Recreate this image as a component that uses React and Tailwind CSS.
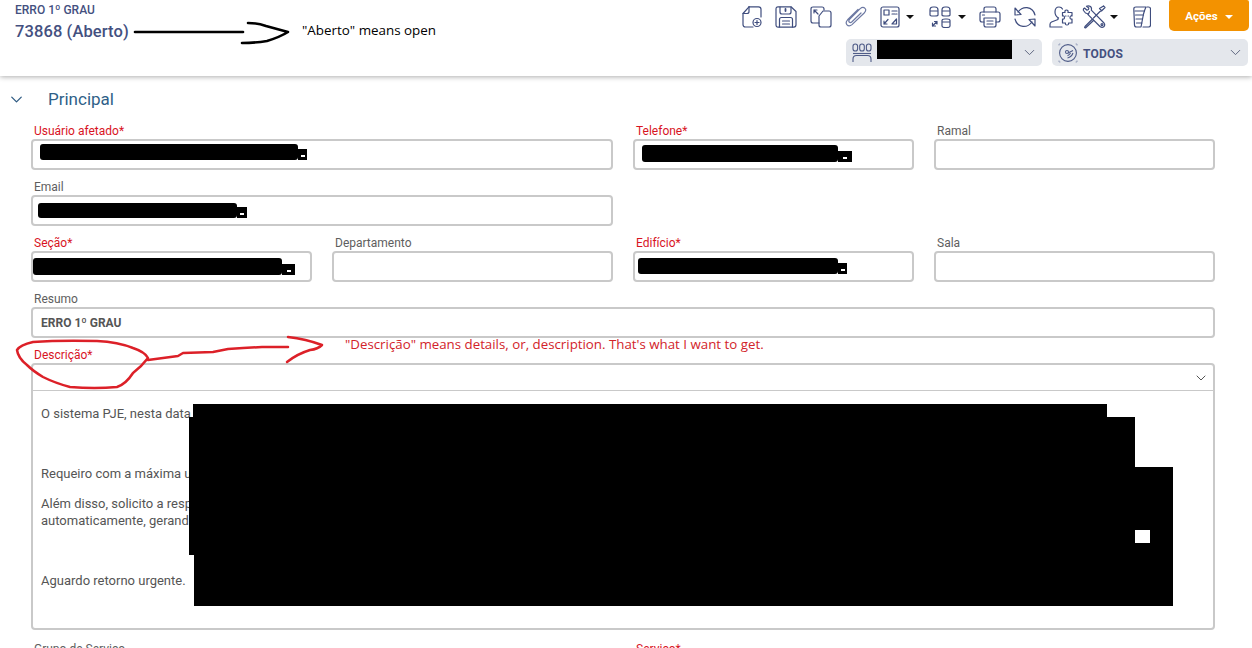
import React from "react";
import { ChevronDown } from "lucide-react";

const Ico = ({ w = 22, h = 22, vb, children, cls = "" }) => (
  <svg width={w} height={h} viewBox={vb || `0 0 ${w} ${h}`} fill="none" stroke="#3f4d7e" strokeWidth="1.2" strokeLinecap="round" strokeLinejoin="round" className={`shrink-0 ${cls}`}>
    {children}
  </svg>
);

const Caret = ({ cls = "" }) => (
  <span className={`w-0 h-0 border-l-[4px] border-r-[4px] border-t-[4px] border-l-transparent border-r-transparent border-t-[#111] ${cls}`} />
);

const NewDoc = () => (
  <Ico w={20} h={22}>
    <path d="M7 .8H16.5Q19 .8 19 3.2V11" />
    <path d="M7 .8 1 7.5V18.5Q1 21 3.5 21H11" />
    <path d="M7 .8V5.5Q7 7.5 5 7.5H1" />
    <circle cx="15" cy="16.5" r="4" />
    <path d="M15 14.5v4M13 16.5h4" />
  </Ico>
);
const Save = () => (
  <Ico w={22} h={22}>
    <path d="M3 .8H16L21 5.5V18.8Q21 21.2 18.8 21.2H3.2Q1 21.2 1 18.8V3Q1 .8 3 .8Z" />
    <path d="M5 1V6Q5 8 7 8H14Q16 8 16 6V1" />
    <path d="M10.5 3v2" strokeWidth="1.8" />
    <path d="M4.5 21V13.5Q4.5 11.5 6.5 11.5H15.5Q17.5 11.5 17.5 13.5V21" />
    <path d="M7.5 15h7M7.5 18h7" />
  </Ico>
);
const CopyIco = () => (
  <Ico w={22} h={22}>
    <path d="M9 17H3Q1 17 1 15V3Q1 1 3 1H12Q14 1 14 3V4" />
    <path d="M13 5H19Q21 5 21 7V19Q21 21 19 21H11Q9 21 9 19V10Z" />
    <path d="M4 4 8 8M4 4H7M4 4V7" />
  </Ico>
);
const Clip = () => (
  <Ico w={24} h={22}>
    <path d="M14 3.5 3.6 13.8Q1.2 16.4 2.8 18.6 5 21.2 8 18.6L20.2 7Q22.8 4.2 21 2.4 19 .2 16.2 2.6L5.6 13.4Q4.2 15 5.2 16 6.4 17.2 8 15.8L17 7" stroke="#6d79a3" />
  </Ico>
);
const FormIco = () => (
  <Ico w={20} h={22}>
    <rect x="1" y="1" width="18" height="20" rx="2" />
    <rect x="4" y="4" width="5" height="5" />
    <path d="M12 5h5M12 8h3M16 8h1" />
    <path d="M4 18 8 13.5M4 18H7M4 18V15" />
    <path d="M12 18 16.5 13V18Z" />
  </Ico>
);
const Group = () => (
  <Ico w={22} h={22}>
    <path d="M1 4Q1 1 4 1H6Q9 1 9 4V9Q9 10 6 10H4Q1 10 1 9ZM1 5H9" />
    <path d="M13 4Q13 1 16 1H18Q21 1 21 4V9Q21 10 18 10H16Q13 10 13 9ZM13 5H21" />
    <path d="M13 14.5Q13 13 16 13H18Q21 13 21 14.5V20Q21 21.5 18 21.5H16Q13 21.5 13 20ZM13 16H21" />
    <path d="M3.5 20 8 15.5M3.5 20H6.5M3.5 20V17M8 15.5H5.5M8 15.5V18" />
  </Ico>
);
const PrinterIco = () => (
  <Ico w={22} h={22}>
    <path d="M5 6V3Q5 1 7 1H15Q17 1 17 3V6" />
    <path d="M5 16H3Q1 16 1 14V8Q1 6 3 6H19Q21 6 21 8V14Q21 16 19 16H17" />
    <path d="M5 12H17V19Q17 21 15 21H7Q5 21 5 19Z" />
    <path d="M8 15h6M8 18h6M3.5 9h2" />
  </Ico>
);
const Refresh = () => (
  <Ico w={22} h={22}>
    <path d="M1 2 7 8.5 1 9Z" />
    <path d="M21 20 15 13.5 21 13Z" />
    <path d="M4 6Q7.5 1.2 13 1.6 19.5 2.5 21 9" />
    <path d="M18 16Q14.5 20.8 9 20.4 2.5 19.5 1 13" />
  </Ico>
);
const UserPuzzle = () => (
  <Ico w={24} h={22}>
    <path d="M9.5 12Q6 10 6 6 6 1 10 1 12.5 1 13.5 3" />
    <path d="M9 12V13.5L2.5 16Q1 16.8 1 18.5V21H13" />
    <path d="M13.5 6.5H16Q15.5 4 17.5 4 19.5 4 19 6.5H23V10Q21 9.5 21 11.5 21 13.5 23 13V17H19.5Q20 19 18 19 16 19 16.5 17H13.5V13Q15.5 13.5 15.5 11.5 15.5 9.5 13.5 10Z" />
    <path d="M16.5 10h.5M19 10h.5" />
  </Ico>
);
const Tools = () => (
  <Ico w={24} h={24}>
    <path d="M7.5 6.5 6.5 9 3.5 8 1.5 5.5Q1 3.5 2.5 3L5 5.2 6.5 4.5 6.8 3 4.5 1.2Q6.5.3 8.5 1.5 10 3 9.3 5.2L22 18Q23.5 20 21.8 21.8 20 23 18 21.5L5.8 9.3" />
    <circle cx="20" cy="19.6" r="1" />
    <path d="M21.5 1 23 2.5 19.5 6 18 6.5 11.5 13M19 5l-1.5-1.5L21.5 1M10 14.5 3 21.5Q2 23 3.5 23L11.5 15.5Z" />
  </Ico>
);
const Note = () => (
  <Ico w={18} h={22}>
    <path d="M3 1H13Q11.5 4 10.5 8L8 21H3.5Q1.5 21 1.5 19L.8 3Q.8 1 3 1Z" />
    <path d="M2 5H11.5M2.5 9H10.5M3 13H9.5M3.5 17H8.8" />
    <path d="M14 1H15.5Q17.5 1 17.5 3V19Q17.5 21 15.5 21H10" />
  </Ico>
);
const People = () => (
  <svg width="20" height="20" viewBox="0 0 20 20" fill="none" stroke="#4f5c88" strokeWidth="1.1" className="shrink-0">
    <rect x="1" y="1" width="4.6" height="7" rx="2.3" />
    <rect x="7.7" y="1" width="4.6" height="7" rx="2.3" />
    <rect x="14.4" y="1" width="4.6" height="7" rx="2.3" />
    <path d="M1 10.5H19" />
    <path d="M1 19V16Q1 12.5 4.5 12.5H15.5Q19 12.5 19 16V19" />
  </svg>
);
const Dish = () => (
  <svg width="20" height="20" viewBox="0 0 20 20" fill="none" stroke="#4f5c88" strokeWidth="1.1" className="shrink-0">
    <circle cx="10" cy="10" r="8.4" />
    <path d="M1 1h1.4M1 1v1.4M19 1h-1.4M19 1v1.4M1 19h1.4M1 19v-1.4M19 19h-1.4M19 19v-1.4" stroke="#9aa3bd" />
    <circle cx="9" cy="9" r="1.5" />
    <path d="M10 10 15 7.5M15 10Q13.5 14 9.5 15M12.5 10Q11.5 12 9.5 12.7" />
  </svg>
);

const SelectBox = ({ icon, children }) => (
  <div className="w-[196px] h-[27px] rounded-[5px] bg-[#e4e7ec] flex items-center pl-[6px] pr-[4px] gap-[5px] relative">
    {icon}
    <div className="flex-1 min-w-0">{children}</div>
    <ChevronDown size={17} strokeWidth={1.4} color="#5f6780" />
  </div>
);

/* a censor bar that hides the value of a field, with its small trailing dash */
const Censor = ({ cls, tailCls }) => (
  <span className={`flex items-end shrink-0 ${cls}`}>
    <span className="h-full flex-1 bg-black rounded-[3px]" />
    <span className={`h-[11px] bg-black flex items-center justify-center ${tailCls}`}>
      <span className="block w-[4px] h-[2px] bg-white mt-[3px]" />
    </span>
  </span>
);

const Field = ({ label, req, cols = "col-span-1", value, children }) => (
  <div className={`${cols} h-[56px] flex flex-col`}>
    <label className={`h-[17px] pl-[3px] text-[12px] leading-[18px] ${req ? "text-[#d8141f]" : "text-[#5e5e5e]"}`}>
      {label}{req ? "*" : ""}
    </label>
    <div className="h-[31px] rounded-[4px] border-2 border-[#c9c9c9] bg-white flex items-center pl-[8px] relative">
      {value && <span className="text-[12px] font-bold text-[#555]">{value}</span>}
      {children}
    </div>
  </div>
);

export default function App() {
  return (
    <div className="relative w-[1252px] h-[648px] overflow-hidden bg-white font-['Roboto',sans-serif]">
      {/* header */}
      <header className="h-[76px] bg-white shadow-[0_1px_5px_rgba(0,0,0,0.32)] flex justify-between pl-[15px] relative">
        <div className="pt-[3px]">
          <div className="text-[12px] leading-[14px] font-medium text-[#44507f]">ERRO 1º GRAU</div>
          <div className="mt-[5px] text-[16.5px] leading-[20px] font-medium text-[#44507f] tracking-[0.1px]">73868 (Aberto)</div>
        </div>
        <div className="w-[510px] flex flex-col items-end pr-[3px]">
          <div className="h-[31px] w-full flex items-start">
            <div className="flex items-center pt-[5px] w-[427px]">
              <NewDoc />
              <span className="ml-[13px]"><Save /></span>
              <span className="ml-[13px]"><CopyIco /></span>
              <span className="ml-[12px]"><Clip /></span>
              <span className="ml-[12px]"><FormIco /></span>
              <Caret cls="ml-[6px]" />
              <span className="ml-[15px]"><Group /></span>
              <Caret cls="ml-[7px]" />
              <span className="ml-[13px]"><PrinterIco /></span>
              <span className="ml-[13px]"><Refresh /></span>
              <span className="ml-[13px]"><UserPuzzle /></span>
              <span className="ml-[9px]"><Tools /></span>
              <Caret cls="ml-[4px]" />
              <span className="ml-[15px]"><Note /></span>
            </div>
            <button className="ml-auto w-[80px] h-[31px] rounded-b-[5px] rounded-t-[2px] bg-[#f39200] text-white text-[11.5px] font-bold flex items-center justify-center gap-[7px] pt-[2px]">
              Ações
              <span className="w-0 h-0 border-l-[4px] border-r-[4px] border-t-[4px] border-l-transparent border-r-transparent border-t-white" />
            </button>
          </div>
          <div className="mt-[8px] mr-[1px] flex gap-[10px]">
            <SelectBox icon={<People />}>
              <div className="w-[135px] h-[19px] bg-black mb-[7px]" />
            </SelectBox>
            <SelectBox icon={<Dish />}>
              <span className="text-[12px] font-bold text-[#44507f] tracking-[0.2px]">TODOS</span>
            </SelectBox>
          </div>
        </div>
      </header>

      {/* section title */}
      <div className="h-[46px] flex items-center pl-[7px] pt-[1px]">
        <ChevronDown size={19} strokeWidth={1.6} color="#2e5a82" />
        <h2 className="ml-[22px] text-[17px] text-[#2f5f88] font-normal">Principal</h2>
      </div>

      {/* form */}
      <div className="pl-[31px] grid grid-cols-[281px_281px_281px_281px] gap-x-[20px]">
        <Field cols="col-span-2" label="Usuário afetado" req>
          <Censor cls="-ml-[1px] -mt-[5px] w-[267px] h-[16px]" tailCls="w-[9px]" />
        </Field>
        <Field label="Telefone" req>
          <Censor cls="-ml-[1px] -mt-[3px] w-[210px] h-[17px]" tailCls="w-[14px]" />
        </Field>
        <Field label="Ramal" />
        <Field cols="col-span-2" label="Email">
          <Censor cls="-ml-[3px] -mt-[1px] w-[209px] h-[15px]" tailCls="w-[10px]" />
        </Field>
        <div className="col-span-2" />
        <Field label="Seção" req>
          <Censor cls="-ml-[8px] -mt-[1px] w-[262px] h-[17px]" tailCls="w-[13px]" />
        </Field>
        <Field label="Departamento" />
        <Field label="Edifício" req>
          <Censor cls="-ml-[5px] -mt-[1px] w-[209px] h-[16px]" tailCls="w-[9px]" />
        </Field>
        <Field label="Sala" />
        <Field cols="col-span-4" label="Resumo" value="ERRO 1º GRAU" />

        <div className="col-span-4">
          <label className="block h-[17px] pl-[3px] text-[12px] leading-[18px] text-[#d8141f]">Descrição*</label>
          <div className="h-[267px] rounded-[4px] border-2 border-[#c9c9c9] bg-white">
            <div className="h-[26px] border-b border-[#c9c9c9] flex items-center justify-end pr-[4px]">
              <ChevronDown size={16} strokeWidth={1.5} color="#555" />
            </div>
            <div className="pl-[8px] pt-[14px] text-[13px] leading-[17px] text-[#555]">
              <p>O sistema PJE, nesta data</p>
              <p className="mt-[43px]">Requeiro com a máxima u</p>
              <p className="mt-[13px]">Além disso, solicito a resp</p>
              <p>automaticamente, gerand</p>
              <p className="mt-[43px]">Aguardo retorno urgente.</p>
            </div>
          </div>
        </div>

        <div className="col-span-2 mt-[10px] pl-[3px] text-[12px] leading-[18px] text-[#5e5e5e]">Grupo de Serviço</div>
        <div className="col-span-2 mt-[10px] pl-[3px] text-[12px] leading-[18px] text-[#d8141f]">Serviço*</div>
      </div>

      {/* description redaction, drawn over the text */}
      <div className="absolute left-[193px] top-[404px] w-[914px] h-[13px] bg-black" />
      <div className="absolute left-[189px] top-[417px] w-[946px] h-[50px] bg-black" />
      <div className="absolute left-[189px] top-[467px] w-[984px] h-[88px] bg-black" />
      <div className="absolute left-[194px] top-[555px] w-[979px] h-[51px] bg-black" />
      <div className="absolute left-[1135px] top-[530px] w-[15px] h-[13px] bg-white" />

      {/* hand-written notes over the screenshot */}
      <svg className="absolute inset-0 pointer-events-none" width="1252" height="648" fill="none" strokeLinecap="round" strokeLinejoin="round">
        <path d="M135 32H243" stroke="#000" strokeWidth="2.6" />
        <path d="M248 23Q258 23 266 26L288 32Q280 37 267 41 255 43 242 43" stroke="#000" strokeWidth="2.6" />
        <path d="M33 342Q60 340 97 341 118 342 133 348 145 352 148 358 142 366 133 373 126 384 117 387 95 389 70 387 55 383 43 377 33 371 27 365 18 358 17 350 20 345 33 342Z" stroke="#dc2028" strokeWidth="2.5" />
        <path d="M148 360 178 356 183 353 213 352 228 349 243 348 262 347 288 347" stroke="#dc2028" strokeWidth="2.5" />
        <path d="M288 337Q306 339 322 345 318 349 310 350 297 354 287 362" stroke="#dc2028" strokeWidth="2.5" />
      </svg>
      <div className="absolute left-[302px] top-[22px] text-[13.4px] leading-[17px] text-black font-['Open_Sans',sans-serif]">"Aberto" means open</div>
      <div className="absolute left-[345px] top-[336px] text-[13.3px] leading-[17px] text-[#d2232a] font-['Open_Sans',sans-serif]">"Descrição" means details, or, description. That's what I want to get.</div>
    </div>
  );
}
